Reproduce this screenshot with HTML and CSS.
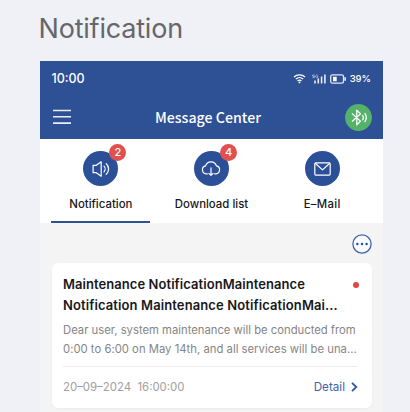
FILE: index.html
```
<!DOCTYPE html>
<html lang="en">
<head>
<meta charset="utf-8">
<title>Notification</title>
<link rel="stylesheet" href="styles.css">
</head>
<body>
<h1 class="page-title"><span>Notification</span></h1>
<main class="phone">
  <header class="header">
    <div class="status">
      <span class="clock">10:00</span>
      <div class="indicators">
        <svg class="wifi" width="13" height="11" viewBox="0 0 14 12" fill="none" stroke="#fff" stroke-width="1.4"><path d="M1 4.4a8.7 8.7 0 0 1 12 0M3 6.7a5.8 5.8 0 0 1 8 0M4.9 8.8a3 3 0 0 1 4.2 0"/><circle cx="7" cy="10.3" r="1" fill="#fff" stroke="none"/></svg>
        <svg class="signal" width="14" height="10" viewBox="0 0 14 10" fill="none" stroke="#e6ebf7"><path stroke-width="1.6" d="M3 9.5V6.5M6.3 9.5V4.5M9.6 9.5V2.5M12.9 9.5V.5"/><path stroke-width=".6" d="M2.6 1H.7v1.2h1.6v1.5H.5M5.8 1.3C4.8.6 3.6 1.1 3.6 2.4s1.3 1.8 2.2 1V2.4H4.9"/></svg>
        <svg class="battery" width="16" height="10" viewBox="0 0 16 10"><rect x=".7" y=".9" width="12.8" height="8.2" rx="1.7" fill="none" stroke="#dfe7f7" stroke-width="1.3"/><path fill="#fff" d="M3 2.8h3.7v4.4H3zM14.4 3.2h1.4v3.6h-1.4z"/></svg>
        <span class="percent">39%</span>
      </div>
    </div>
    <div class="bar">
      <svg width="18" height="16" viewBox="0 0 18 16" stroke="#e9eefa" stroke-width="1.6"><path d="M0 1.5h18M0 7.8h18M0 14.1h18"/></svg>
      <span class="bar-title">Message Center</span>
      <svg width="27" height="27" viewBox="0 0 27 27" fill="none" stroke="#fff" stroke-width="1.25" stroke-linecap="round" stroke-linejoin="round"><circle cx="13.5" cy="13.5" r="13.4" fill="#55b26b" stroke="none"/><path d="M7.3 9.8l8.2 7.3-3.7 3.7V6.2l3.7 3.7-8.2 7.3M17.7 11.3a4.2 4.2 0 0 1 0 4.5M19.9 9.4a7.4 7.4 0 0 1 0 8.3"/></svg>
    </div>
  </header>
  <nav class="tabs">
    <div class="tab active">
      <div class="icon">
        <svg width="18" height="18" viewBox="0 0 18 18" fill="none" stroke="#fff" stroke-width="1.2" stroke-linecap="round" stroke-linejoin="round"><path d="M1.1 5.3h3.2L9.2 1.8v14.4l-4.9-3.5H1.1zM12 6.2c1.5 1.5 1.5 4.1 0 5.6M14.2 3.7c3.2 2.8 3.2 7.8 0 10.6"/></svg>
        <span class="badge">2</span>
      </div>
      <span class="label">Notification</span>
    </div>
    <div class="tab">
      <div class="icon">
        <svg width="20" height="18" viewBox="0 0 20 18" fill="none" stroke="#fff" stroke-width="1.2" stroke-linecap="round" stroke-linejoin="round"><path d="M6.3 13.8H5.1a4 4 0 0 1-.5-7.9 5.6 5.6 0 0 1 10.8 0 4 4 0 0 1-.5 7.9h-1.2M10 7.8v7.4M7.9 13.3l2.1 2.1 2.1-2.1"/></svg>
        <span class="badge">4</span>
      </div>
      <span class="label">Download list</span>
    </div>
    <div class="tab">
      <div class="icon">
        <svg width="17" height="14" viewBox="0 0 17 14" fill="none" stroke="#fff" stroke-width="1.2" stroke-linejoin="round"><rect x=".8" y=".9" width="15.4" height="12.2" rx="1"/><path d="M1.2 1.3l7.3 6.6 7.3-6.6"/></svg>
      </div>
      <span class="label mail">E–Mail</span>
    </div>
  </nav>
  <div class="tools">
    <svg width="20" height="20" viewBox="0 0 20 20"><circle cx="10" cy="10" r="9.1" fill="#fafbff" stroke="#3c64ae" stroke-width="1.3"/><g fill="#2c519b"><circle cx="5.4" cy="10" r="1.25"/><circle cx="10" cy="10" r="1.25"/><circle cx="14.6" cy="10" r="1.25"/></g></svg>
  </div>
  <article class="card">
    <span class="dot"></span>
    <h2 class="title"><span class="t1">Maintenance NotificationMaintenance</span><br><span class="t2">Notification Maintenance NotificationMai...</span></h2>
    <p class="desc"><span class="d1">Dear user, system maintenance will be conducted from</span><br><span class="d2">0:00 to 6:00 on May 14th, and all services will be una...</span></p>
    <footer class="foot">
      <span class="date">20–09–2024&nbsp; 16:00:00</span>
      <span class="detail">Detail<svg width="7" height="10" viewBox="0 0 7 10" fill="none" stroke="#2f559f" stroke-width="1.8"><path d="M1 .8l4.3 4.2L1 9.2"/></svg></span>
    </footer>
  </article>
</main>
</body>
</html>
```
FILE: styles.css
```
* { box-sizing: border-box; }
body { margin: 0; height: 412px; overflow: hidden; background: #eff1f6; font-family: Inter, "Liberation Sans", sans-serif; color: #17181a; white-space: nowrap; }
svg { display: block; flex: none; }
.page-title { margin: 0; height: 61px; padding: 12px 0 0 38.5px; font-size: 27px; line-height: 34px; font-weight: 400; color: #66676b; letter-spacing: -.2px; }
.phone { width: 343px; height: 351px; margin-left: 40px; background: #f4f4f5; }
.header { height: 78px; background: #2e5095; color: #fff; }
.status { height: 34px; padding: 1px 12px 0 11.5px; display: flex; align-items: center; justify-content: space-between; }
.clock { font-size: 12.5px; font-weight: 500; }
.indicators { display: flex; align-items: center; }
.signal { margin-left: 6px; }
.battery { margin-left: 4px; }
.percent { margin-left: 4px; font-size: 9.5px; font-weight: 500; }
.bar { height: 44px; padding: 0 11px 0 13px; display: flex; align-items: center; justify-content: space-between; }
.bar-title { font: 500 14.2px/22px "Noto Sans CJK SC", sans-serif; }
.tabs { height: 84px; padding: 0 5.5px; display: grid; grid-template-columns: repeat(3, 1fr); background: #fff; }
.tab { padding-top: 12px; display: flex; flex-direction: column; align-items: center; }
.icon { position: relative; width: 35px; height: 35px; border-radius: 50%; background: #2c5098; display: flex; align-items: center; justify-content: center; }
.badge { position: absolute; left: 26px; top: -7px; width: 17px; height: 17px; border-radius: 50%; background: #df514e; color: #fff; font-size: 11px; line-height: 17px; text-align: center; font-weight: 500; }
.label { margin-top: 10px; font-size: 11.4px; line-height: 16px; font-weight: 500; }
.mail { letter-spacing: .3px; }
.active::after { content: ""; width: 99px; height: 2px; margin-top: auto; background: #2e5095; }
.tools { height: 40px; padding: 11px 11px 0 0; display: flex; justify-content: flex-end; }
.card { position: relative; width: 320px; height: 145px; margin-left: 11.5px; padding: 11px 11.5px 0; border-radius: 6px; background: #fff; box-shadow: 0 1px 3px rgba(0,0,0,.04); }
.dot { position: absolute; left: 301.5px; top: 19px; width: 6px; height: 6px; border-radius: 50%; background: #df4547; }
.title { margin: 0; font-size: 13px; line-height: 21px; font-weight: 600; }
.t1 { letter-spacing: .06px; }
.t2 { letter-spacing: .11px; }
.desc { margin: 5px 0 0; font-size: 11.27px; line-height: 19px; color: #858585; }
.d2 { letter-spacing: .02px; }
.foot { margin-top: 7px; width: 295px; height: 40px; border-top: 1px solid #ededed; display: flex; align-items: center; justify-content: space-between; font-size: 11.4px; color: #a0a0a0; }
.detail { display: flex; align-items: center; gap: 6px; font-size: 11.7px; color: #3f62ab; }
```
